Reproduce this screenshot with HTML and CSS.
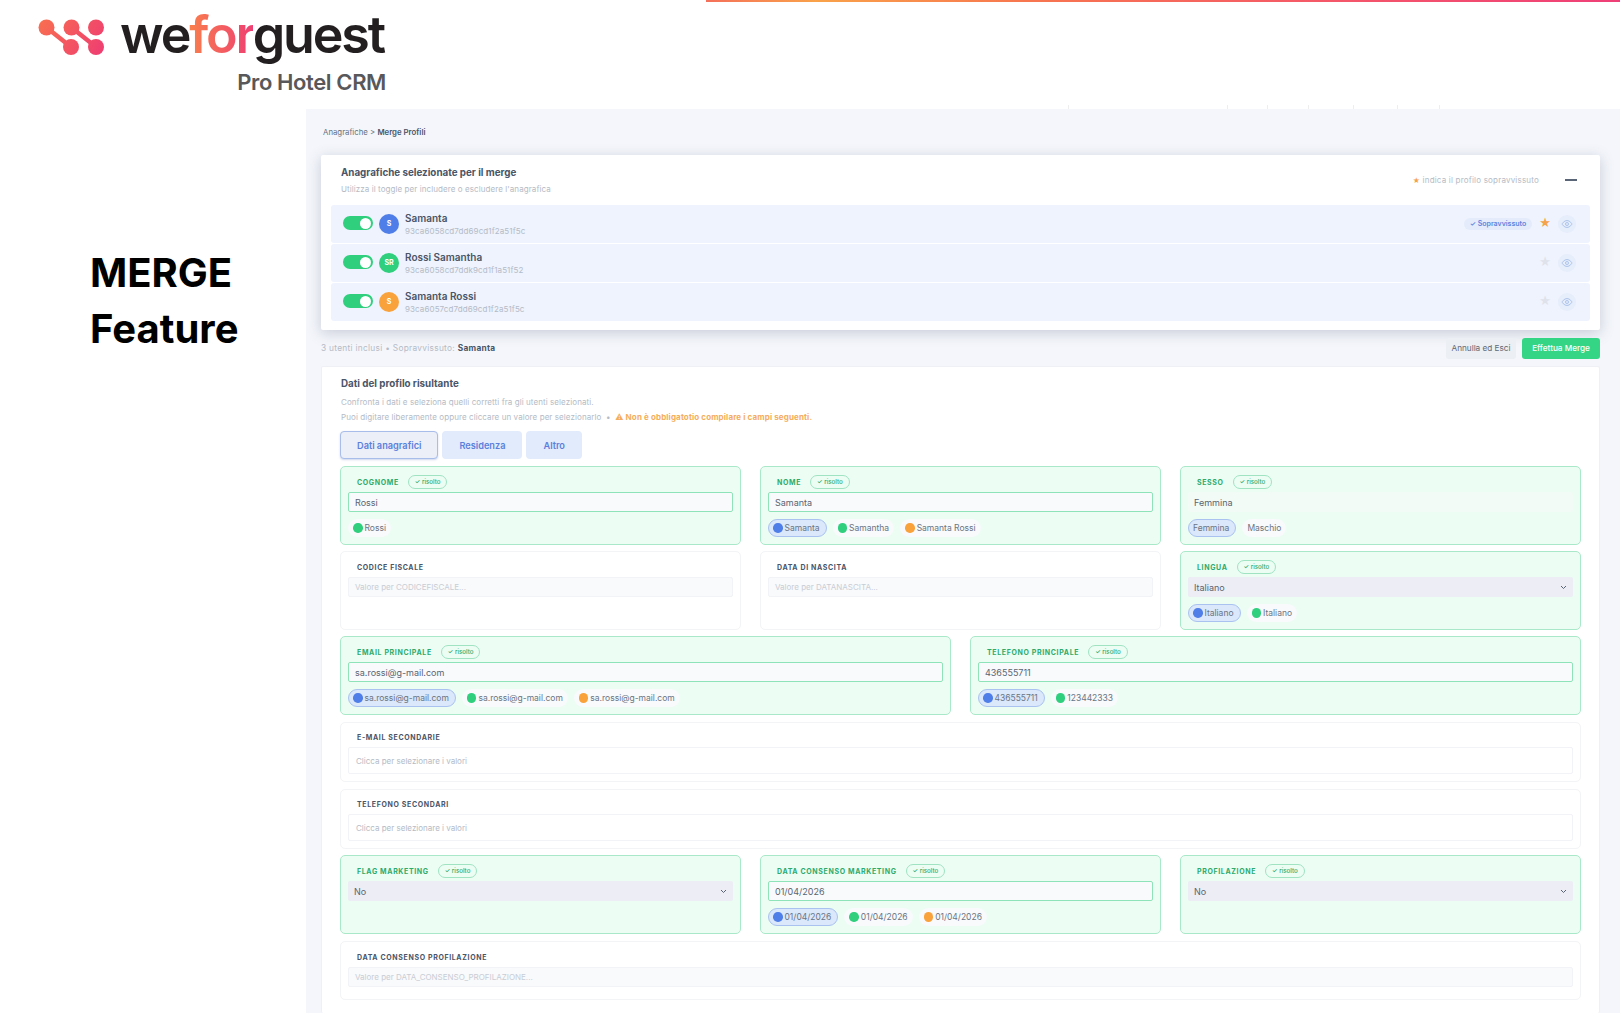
FILE: index.html
```html
<!DOCTYPE html>
<html>
  <head>
    <meta charset="UTF-8">
    <title>weforguest - Merge Profili</title>
    <link rel="stylesheet" href="styles.css">
  </head>
  <body>
    <div class="topbar"></div>
    <header class="brand">
      <svg class="logo-mark" width="66" height="40" viewBox="0 0 66 40">
        <defs>
          <linearGradient id="markGrad" gradientUnits="userSpaceOnUse" x1="0" y1="0" x2="66" y2="40">
            <stop offset="0" stop-color="#f9704f"/>
            <stop offset="1" stop-color="#ee3b73"/>
          </linearGradient>
        </defs>
        <g fill="url(#markGrad)" stroke="url(#markGrad)">
          <circle cx="8.500" cy="9.500" r="8" stroke="none"/>
          <circle cx="33.500" cy="9.500" r="8" stroke="none"/>
          <circle cx="58" cy="9.500" r="8" stroke="none"/>
          <circle cx="33" cy="29" r="8" stroke="none"/>
          <circle cx="58" cy="29" r="8" stroke="none"/>
          <path d="M8.500 9.500L33 29M33.500 9.500L58 29" stroke-width="4.500" fill="none"/>
        </g>
      </svg>
      <div class="brand-text">
        <div class="logo-word">we<span class="logo-for">for</span>guest</div>
        <div class="logo-sub">Pro Hotel CRM</div>
      </div>
    </header>
    <div class="main">
      <aside class="side">
        <h1>MERGE<br>Feature</h1>
      </aside>
      <section class="panel">
        <div class="crumbs">Anagrafiche &gt; <b>Merge Profili</b></div>

        <div class="card card-users">
          <div class="users-head">
            <div>
              <h2>Anagrafiche selezionate per il merge</h2>
              <p class="muted">Utilizza il toggle per includere o escludere l'anagrafica</p>
            </div>
            <div class="users-hint"><span class="star-small">★</span> indica il profilo sopravvissuto</div>
            <div class="collapse"></div>
          </div>
          <div class="user">
            <div class="toggle"></div>
            <div class="avatar blue">S</div>
            <div class="user-info">
              <div class="user-name">Samanta</div>
              <div class="user-id">93ca6058cd7dd69cd1f2a51f5c</div>
            </div>
            <div class="survivor">✓ Sopravvissuto</div>
            <div class="star on">★</div>
            <div class="eye">
              <svg width="12" height="12" viewBox="0 0 12 12"><path d="M1 6s2-3.500 5-3.500S11 6 11 6 9 9.500 6 9.500 1 6 1 6z"/><circle cx="6" cy="6" r="1.500"/></svg>
            </div>
          </div>
          <div class="user">
            <div class="toggle"></div>
            <div class="avatar green">SR</div>
            <div class="user-info">
              <div class="user-name">Rossi Samantha</div>
              <div class="user-id">93ca6058cd7ddk9cd1f1a51f52</div>
            </div>
            <div class="star">★</div>
            <div class="eye">
              <svg width="12" height="12" viewBox="0 0 12 12"><path d="M1 6s2-3.500 5-3.500S11 6 11 6 9 9.500 6 9.500 1 6 1 6z"/><circle cx="6" cy="6" r="1.500"/></svg>
            </div>
          </div>
          <div class="user">
            <div class="toggle"></div>
            <div class="avatar orange">S</div>
            <div class="user-info">
              <div class="user-name">Samanta Rossi</div>
              <div class="user-id">93ca6057cd7dd69cd1f2a51f5c</div>
            </div>
            <div class="star">★</div>
            <div class="eye">
              <svg width="12" height="12" viewBox="0 0 12 12"><path d="M1 6s2-3.500 5-3.500S11 6 11 6 9 9.500 6 9.500 1 6 1 6z"/><circle cx="6" cy="6" r="1.500"/></svg>
            </div>
          </div>
        </div>

        <div class="actions">
          <div class="summary">3 utenti inclusi • Sopravvissuto: <b>Samanta</b></div>
          <div class="btn btn-cancel">Annulla ed Esci</div>
          <div class="btn btn-merge">Effettua Merge</div>
        </div>

        <div class="card card-form">
          <h2>Dati del profilo risultante</h2>
          <p class="muted line-one">Confronta i dati e seleziona quelli corretti fra gli utenti selezionati.</p>
          <p class="muted line-two">Puoi digitare liberamente oppure cliccare un valore per selezionarlo &nbsp;•&nbsp; <span class="warn">⚠ Non è obbligatotio compilare i campi seguenti.</span></p>
          <div class="tabs">
            <div class="tab active">Dati anagrafici</div>
            <div class="tab">Residenza</div>
            <div class="tab">Altro</div>
          </div>

          <div class="form-row cols-3">
            <div class="field ok">
              <div class="label">COGNOME <span class="badge">✓ risolto</span></div>
              <div class="input">Rossi</div>
              <div class="chips">
                <span class="chip"><i class="dot green"></i>Rossi</span>
              </div>
            </div>
            <div class="field ok">
              <div class="label">NOME <span class="badge">✓ risolto</span></div>
              <div class="input">Samanta</div>
              <div class="chips">
                <span class="chip sel"><i class="dot blue"></i>Samanta</span>
                <span class="chip"><i class="dot green"></i>Samantha</span>
                <span class="chip"><i class="dot orange"></i>Samanta Rossi</span>
              </div>
            </div>
            <div class="field ok">
              <div class="label">SESSO <span class="badge">✓ risolto</span></div>
              <div class="input flat">Femmina</div>
              <div class="chips">
                <span class="chip sel">Femmina</span>
                <span class="chip">Maschio</span>
              </div>
            </div>
          </div>

          <div class="form-row cols-3">
            <div class="field">
              <div class="label">CODICE FISCALE</div>
              <div class="input empty">Valore per CODICEFISCALE...</div>
            </div>
            <div class="field">
              <div class="label">DATA DI NASCITA</div>
              <div class="input empty">Valore per DATANASCITA...</div>
            </div>
            <div class="field ok">
              <div class="label">LINGUA <span class="badge">✓ risolto</span></div>
              <div class="input select">Italiano
                <svg width="7" height="5" viewBox="0 0 7 5"><path d="M1 1l2.500 2.500L6 1"/></svg>
              </div>
              <div class="chips">
                <span class="chip sel"><i class="dot blue"></i>Italiano</span>
                <span class="chip"><i class="dot green"></i>Italiano</span>
              </div>
            </div>
          </div>

          <div class="form-row cols-2">
            <div class="field ok">
              <div class="label">EMAIL PRINCIPALE <span class="badge">✓ risolto</span></div>
              <div class="input">sa.rossi@g-mail.com</div>
              <div class="chips">
                <span class="chip sel"><i class="dot blue"></i>sa.rossi@g-mail.com</span>
                <span class="chip"><i class="dot green"></i>sa.rossi@g-mail.com</span>
                <span class="chip"><i class="dot orange"></i>sa.rossi@g-mail.com</span>
              </div>
            </div>
            <div class="field ok">
              <div class="label">TELEFONO PRINCIPALE <span class="badge">✓ risolto</span></div>
              <div class="input">436555711</div>
              <div class="chips">
                <span class="chip sel"><i class="dot blue"></i>436555711</span>
                <span class="chip"><i class="dot green"></i>123442333</span>
              </div>
            </div>
          </div>

          <div class="field multi">
            <div class="label">E-MAIL SECONDARIE</div>
            <div class="input tall">Clicca per selezionare i valori</div>
          </div>
          <div class="field multi">
            <div class="label">TELEFONO SECONDARI</div>
            <div class="input tall">Clicca per selezionare i valori</div>
          </div>

          <div class="form-row cols-3">
            <div class="field ok">
              <div class="label">FLAG MARKETING <span class="badge">✓ risolto</span></div>
              <div class="input select">No
                <svg width="7" height="5" viewBox="0 0 7 5"><path d="M1 1l2.500 2.500L6 1"/></svg>
              </div>
            </div>
            <div class="field ok">
              <div class="label">DATA CONSENSO MARKETING <span class="badge">✓ risolto</span></div>
              <div class="input">01/04/2026</div>
              <div class="chips">
                <span class="chip sel"><i class="dot blue"></i>01/04/2026</span>
                <span class="chip"><i class="dot green"></i>01/04/2026</span>
                <span class="chip"><i class="dot orange"></i>01/04/2026</span>
              </div>
            </div>
            <div class="field ok">
              <div class="label">PROFILAZIONE <span class="badge">✓ risolto</span></div>
              <div class="input select">No
                <svg width="7" height="5" viewBox="0 0 7 5"><path d="M1 1l2.500 2.500L6 1"/></svg>
              </div>
            </div>
          </div>

          <div class="field last">
            <div class="label">DATA CONSENSO PROFILAZIONE</div>
            <div class="input empty">Valore per DATA_CONSENSO_PROFILAZIONE...</div>
          </div>
        </div>
      </section>
    </div>
  </body>
</html>
```

FILE: styles.css
```css
html, body {
  margin: 0;
  height: 1013px;
  overflow: hidden;
  background: #fff;
  font-family: Inter, "Liberation Sans", sans-serif;
}
h1, h2, p {
  margin: 0;
}

.topbar {
  height: 2px;
  margin-left: 706px;
  background: linear-gradient(90deg, #f4705a 0%, #f9a24a 12%, #f7764f 35%, #f4566a 70%, #ef3f78 100%);
}

/* logo */
.brand {
  display: flex;
  height: 107px;
  padding-left: 38px;
  box-sizing: border-box;
}
.logo-mark {
  margin-top: 16px;
  margin-right: 16px;
}
.brand-text {
  width: 266px;
}
.logo-word {
  height: 66px;
  font-size: 52px;
  line-height: 66px;
  font-weight: 600;
  letter-spacing: -2.200px;
  color: #231f20;
  white-space: nowrap;
}
.logo-for {
  background: linear-gradient(90deg, #f97f4c, #ee3f72);
  -webkit-background-clip: text;
  background-clip: text;
  color: transparent;
}
.logo-sub {
  margin-top: 1px;
  text-align: right;
  font-size: 22px;
  line-height: 26px;
  font-weight: 600;
  letter-spacing: -0.400px;
  color: #58585a;
}

.main {
  display: flex;
  height: 904px;
}
.side {
  width: 306px;
  flex: none;
  box-sizing: border-box;
  padding: 136px 0 0 90px;
}
.side h1 {
  font-size: 40px;
  line-height: 56px;
  font-weight: 700;
  color: #000;
}

/* app screenshot */
.panel {
  position: relative;
  flex: 1;
  box-sizing: border-box;
  padding: 0 20px 0 15px;
  background: #f4f6fb;
}
.panel::before {
  content: "";
  position: absolute;
  top: -4px;
  left: 0;
  right: 0;
  height: 4px;
  background:
    linear-gradient(#eee, #eee) 762px 0 / 1px 4px no-repeat,
    linear-gradient(#eee, #eee) 921px 0 / 1px 4px no-repeat,
    linear-gradient(#eee, #eee) 961px 0 / 1px 4px no-repeat,
    linear-gradient(#eee, #eee) 1002px 0 / 1px 4px no-repeat,
    linear-gradient(#eee, #eee) 1047px 0 / 1px 4px no-repeat,
    linear-gradient(#eee, #eee) 1091px 0 / 1px 4px no-repeat,
    linear-gradient(#eee, #eee) 1133px 0 / 1px 4px no-repeat;
}
.crumbs {
  height: 46px;
  padding: 17px 0 0 2px;
  box-sizing: border-box;
  font-size: 7.800px;
  line-height: 12px;
  color: #66717f;
}
.crumbs b {
  font-weight: 600;
  color: #4a5568;
}
.card {
  background: #fff;
  border-radius: 2px;
}
.card h2 {
  font-size: 9.800px;
  line-height: 14px;
  font-weight: 700;
  color: #4a5568;
}
.muted {
  font-size: 8px;
  line-height: 12px;
  letter-spacing: 0.080px;
  color: #b4bbc6;
}

.card-users {
  padding: 10px;
  height: 175px;
  box-sizing: border-box;
  box-shadow: 0 3px 14px rgba(70, 80, 110, 0.25);
}
.users-head {
  display: flex;
  align-items: center;
  height: 40px;
  padding: 0 0 10px 10px;
  box-sizing: border-box;
}
.users-head > div:first-child {
  flex: 1;
}
.users-head .muted {
  margin-top: 3px;
}
.users-hint {
  font-size: 8px;
  color: #b4bbc6;
  letter-spacing: 0.200px;
}
.star-small {
  color: #f5a24b;
  font-family: "DejaVu Sans", sans-serif;
}
.collapse {
  width: 12px;
  height: 2px;
  margin: 0 13px 0 26px;
  background: #5a6578;
}
.user {
  display: flex;
  align-items: center;
  height: 38px;
  margin-bottom: 1px;
  padding: 0 14px 0 12px;
  background: #eef3fd;
  border-radius: 3px;
}
.user:last-child {
  margin-bottom: 0;
}
.toggle {
  position: relative;
  width: 30px;
  height: 14px;
  margin-top: -2px;
  border-radius: 7px;
  background: #2fcf7e;
}
.toggle::after {
  content: "";
  position: absolute;
  top: 1.500px;
  right: 2px;
  width: 11px;
  height: 11px;
  border-radius: 50%;
  background: #fff;
}
.avatar {
  width: 20px;
  height: 20px;
  margin: 0 6px;
  border-radius: 50%;
  text-align: center;
  font-size: 7px;
  line-height: 20px;
  font-weight: 700;
  color: #fff;
}
.blue { background: #4f7ee8; }
.green { background: #2fcf7e; }
.orange { background: #f9a23b; }
.user-info {
  flex: 1;
  padding-top: 1px;
}
.user-name {
  font-size: 10px;
  line-height: 13px;
  font-weight: 600;
  color: #4a5568;
}
.user-id {
  font-size: 8px;
  line-height: 11px;
  margin-top: 1px;
  letter-spacing: 0.100px;
  color: #b4bbc8;
}
.survivor {
  width: 68px;
  height: 12px;
  border-radius: 6px;
  background: #e4ecfb;
  text-align: center;
  font-size: 7px;
  line-height: 12px;
  font-weight: 600;
  color: #5b84e0;
}
.star {
  width: 12px;
  margin: -3px 0 0 7px;
  font-family: "DejaVu Sans", sans-serif;
  font-size: 13px;
  line-height: 14px;
  color: #dfe2ea;
  text-align: center;
}
.star.on {
  color: #f5a24b;
}
.eye {
  display: flex;
  align-items: center;
  justify-content: center;
  width: 18px;
  height: 18px;
  margin-left: 7px;
  border-radius: 50%;
  background: #e6edfb;
}
.eye svg {
  fill: none;
  stroke: #a6bfe8;
  stroke-width: 0.900;
}

.actions {
  display: flex;
  align-items: center;
  height: 36px;
  gap: 6px;
}
.summary {
  flex: 1;
  font-size: 8.300px;
  letter-spacing: 0.300px;
  color: #b4bbc6;
}
.summary b {
  font-weight: 700;
  color: #4a5568;
}
.btn {
  height: 21px;
  border-radius: 3px;
  text-align: center;
  font-size: 8.200px;
  line-height: 21px;
}
.btn-cancel {
  width: 70px;
  background: #eceff3;
  color: #5f6875;
}
.btn-merge {
  width: 78px;
  background: #34d584;
  color: #fff;
  font-weight: 500;
}

.card-form {
  padding: 10px 18px 0;
  height: 647px;
  border: 1px solid #eef0f5;
  border-bottom: 0;
  box-sizing: border-box;
}
.card-form h2,
.card-form .muted {
  margin-left: 1px;
}
.line-one {
  margin-top: 5px;
}
.line-two {
  margin-top: 3px;
}
.warn {
  font-weight: 700;
  letter-spacing: 0.130px;
  color: #f5ad5b;
}
.tabs {
  display: flex;
  gap: 4px;
  margin: 8px 0 7px;
}
.tab {
  height: 28px;
  padding: 0 16px;
  border: 1px solid transparent;
  border-radius: 4px;
  box-sizing: border-box;
  background: #e2ebfb;
  font-size: 9.200px;
  line-height: 27px;
  font-weight: 600;
  color: #5b80dc;
}
.tab.active {
  background: #eceef8;
  border-color: #a8bdea;
  box-shadow: 0 1px 2px rgba(90, 120, 200, 0.3);
}

.form-row {
  display: grid;
  gap: 19px;
  margin-bottom: 6px;
}
.cols-3 {
  grid-template-columns: repeat(3, 1fr);
}
.cols-2 {
  grid-template-columns: repeat(2, 1fr);
}
.field {
  padding: 7px;
  border: 1px solid #f3f4f6;
  border-radius: 5px;
  background: #fff;
}
.field.ok {
  border-color: #a9e9c9;
  background: #ecfdf3;
}
.field.multi {
  padding-top: 6px;
  margin: 7px 0;
}
.field.multi + .multi {
  margin-bottom: 6px;
}
.field.last {
  margin-top: 7px;
  padding-bottom: 12px;
}
.label {
  display: flex;
  align-items: center;
  gap: 9px;
  height: 18px;
  padding: 0 0 2px 9px;
  box-sizing: border-box;
  font-size: 7px;
  font-weight: 700;
  letter-spacing: 0.640px;
  color: #4a5568;
}
.ok .label {
  color: #2eaa6b;
}
.badge {
  height: 12px;
  padding: 0 6px;
  border: 1px solid #9fe3c2;
  border-radius: 7px;
  font-size: 6.200px;
  line-height: 12px;
  font-weight: 500;
  letter-spacing: 0;
  color: #2eaa6b;
}
.input {
  display: flex;
  align-items: center;
  justify-content: space-between;
  height: 20px;
  padding: 0 6px;
  box-sizing: border-box;
  border: 1px solid #8fe3b9;
  border-radius: 2px;
  background: #f8fafc;
  font-size: 9px;
  color: #5a6472;
}
.input.flat {
  padding: 0 5px;
  border-color: transparent;
  background: #f3fbf7;
}
.input.select {
  padding: 0 5px;
  border-color: transparent;
  background: #edeef5;
}
.input.select svg {
  fill: none;
  stroke: #5a6472;
  stroke-width: 1;
}
.input.empty {
  border-color: #f1f3f6;
  background: #f9fafb;
  font-size: 8px;
  color: #c8cdd6;
}
.input.tall {
  height: 27px;
  padding: 0 7px;
  border-color: #f1f3f6;
  background: #fff;
  font-size: 8px;
  color: #b4bbc6;
}
.chips {
  display: flex;
  gap: 6px;
  margin-top: 7px;
}
.chip {
  display: flex;
  align-items: center;
  gap: 2px;
  height: 18px;
  padding: 0 4px;
  box-sizing: border-box;
  border: 1px solid transparent;
  border-radius: 9px;
  background: #f8fafc;
  font-size: 8.500px;
  color: #6a7482;
  white-space: nowrap;
}
.chip.sel {
  padding: 0 6px 0 4px;
  border-color: #a9c2f0;
  background: #dbe7fb;
}
.dot {
  width: 9.500px;
  height: 9.500px;
  border-radius: 50%;
}
```
